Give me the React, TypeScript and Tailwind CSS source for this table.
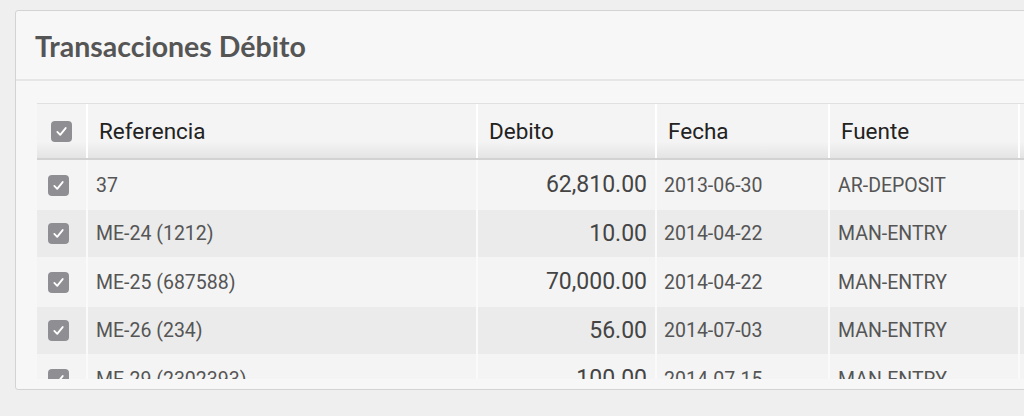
import React from "react";

const rows = [
  { ref: "37", debit: "62,810.00", date: "2013-06-30", src: "AR-DEPOSIT" },
  { ref: "ME-24 (1212)", debit: "10.00", date: "2014-04-22", src: "MAN-ENTRY" },
  { ref: "ME-25 (687588)", debit: "70,000.00", date: "2014-04-22", src: "MAN-ENTRY" },
  { ref: "ME-26 (234)", debit: "56.00", date: "2014-07-03", src: "MAN-ENTRY" },
  { ref: "ME-29 (2302393)", debit: "100.00", date: "2014-07-15", src: "MAN-ENTRY" },
];

function Check() {
  return (
    <div className="w-[21px] h-[21px] rounded-[4px] bg-[#8e8e93] flex items-center justify-center">
      <svg width="13" height="13" viewBox="0 0 14 14" fill="none">
        <path d="M2.5 7.5 L5.6 10.6 L11.5 3.3" stroke="white" strokeWidth="2" strokeLinecap="round" strokeLinejoin="round" />
      </svg>
    </div>
  );
}

export default function App() {
  return (
    <div className="w-[1024px] h-[416px] overflow-hidden bg-[#efefef] pt-[10px] pl-[15px]" style={{ fontFamily: "Roboto, sans-serif" }}>
      <div className="w-[1040px] h-[380px] bg-[#f7f7f7] border border-[#d3d3d3] rounded-[3px] flex flex-col">
        <div className="h-[70px] border-b-2 border-[#e6e6e6] flex items-center pl-[19px] pt-[3px]">
          <h1 className="text-[28.5px] font-bold text-[#555555]" style={{ fontFamily: "Lato, sans-serif" }}>
            Transacciones Débito
          </h1>
        </div>
        <div className="ml-[21px] mt-[22px] h-[276px] overflow-hidden">
          <div className="flex h-[57px] border-t border-[#e0e0e0] border-b-2 border-b-[#d2d2d2] bg-gradient-to-b from-[#f4f4f4] from-70% to-[#e4e4e4] text-[22.5px] text-[#222222]">
            <div className="w-[51px] shrink-0 flex items-center justify-center border-r-2 border-white">
              <Check />
            </div>
            <div className="w-[390px] shrink-0 flex items-center pl-[11px] pt-[2px] border-r-2 border-white">Referencia</div>
            <div className="w-[179px] shrink-0 flex items-center pl-[11px] pt-[2px] border-r-2 border-white">Debito</div>
            <div className="w-[173px] shrink-0 flex items-center pl-[11px] pt-[2px] border-r-2 border-white">Fecha</div>
            <div className="w-[190px] shrink-0 flex items-center pl-[11px] pt-[2px] border-r-2 border-white">Fuente</div>
            <div className="flex-1"></div>
          </div>
          {rows.map((r, i) => (
            <div
              key={i}
              className={
                "flex text-[19.5px] text-[#555555] " +
                (i % 2 === 0 ? "bg-[#f4f4f4] h-[50px]" : "bg-[#ebebeb] h-[47px]")
              }
            >
              <div className="w-[51px] shrink-0 flex items-center pl-[11px] border-r-2 border-[#fafafa]">
                <Check />
              </div>
              <div className="w-[390px] shrink-0 flex items-center pl-[8px] pt-[1px] border-r-2 border-[#fafafa]">{r.ref}</div>
              <div className="w-[179px] shrink-0 flex items-center justify-end pr-[8px] pt-[1px] text-[23px] text-[#444444] border-r-2 border-[#fafafa]">
                {r.debit}
              </div>
              <div className="w-[173px] shrink-0 flex items-center pl-[7px] pt-[1px] border-r-2 border-[#fafafa]">{r.date}</div>
              <div className="w-[190px] shrink-0 flex items-center pl-[8px] pt-[1px] border-r-2 border-[#fafafa]">{r.src}</div>
              <div className="flex-1"></div>
            </div>
          ))}
        </div>
      </div>
    </div>
  );
}
